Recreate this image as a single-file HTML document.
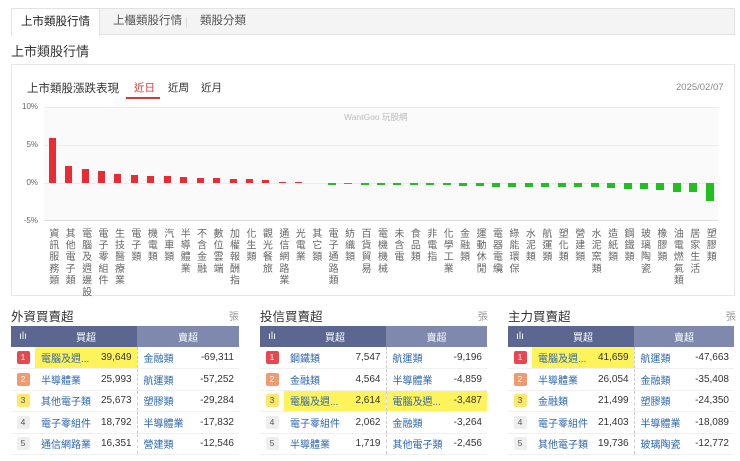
<!DOCTYPE html>
<html><head><meta charset="utf-8"><style>
*{margin:0;padding:0;box-sizing:border-box}
body{width:740px;height:461px;overflow:hidden;background:#fff;font-family:"Liberation Sans","Noto Sans CJK TC",sans-serif;color:#333;position:relative}
.abs{position:absolute}
.tabs{left:11px;top:8px;width:724px;height:27px;background:#f4f4f5;border:1px solid #e2e2e2}
.tab{position:absolute;top:0;height:26px;line-height:24px;font-size:11.5px;color:#555}
.tab.act{left:-1px;top:-1px;width:89px;height:28px;background:#fff;border:1px solid #e2e2e2;border-bottom:none;color:#222;text-align:center;line-height:26px}
.panel{left:11px;top:64px;width:724px;height:232px;border:1px solid #e6e6e6}
.plot{left:44px;top:107px;width:674px;height:114px;background:#fafafa}
.grid{position:absolute;left:0;width:674px;height:1px;background:#ececec}
.cols{position:absolute;left:0;top:0;width:674px;height:114px;display:flex}
.c{flex:1;position:relative}
.c i{position:absolute;left:50%;margin-left:-3.5px;width:7px}
.r{background:#ea2b33;bottom:38px}
.g{background:#1fc01f;top:76px;width:8px!important;margin-left:-4px!important}
.labs{left:44px;top:228px;width:674px;display:flex}
.labs div{flex:1;display:flex;justify-content:center}
.labs span{writing-mode:vertical-rl;text-orientation:upright;font-size:10px;line-height:11px;letter-spacing:1.7px;color:#666}
.yl{font-size:8px;color:#666;left:22px;width:16px;text-align:right}
.sec h3{position:absolute;top:306px;font-size:12.5px;font-weight:normal;color:#333}
.unit{position:absolute;top:308px;font-size:10px;color:#999}
table{position:absolute;top:326px;border-collapse:collapse;font-size:10px;table-layout:fixed}
th{height:21px;color:#fff;font-weight:normal;font-size:10px}
th.a{background:#5b6790}
th.b{background:#7f89ad}
td{height:21.5px;border-bottom:1px solid #f0f0f0;white-space:nowrap;overflow:hidden}
td.n{color:#2b66b0;padding-left:6px}
td.v{text-align:right;padding-right:5px;color:#333}
td.d{border-left:1px dashed #ccc}
td.k{text-align:center}
.bd{display:inline-block;width:13px;height:13px;line-height:13px;font-size:8.5px;text-align:center;border-radius:2px;color:#fff}
.b1{background:#e9474f}.b2{background:#f29a6f}.b3{background:#fbe86c;color:#555}.b4{background:#eee;color:#555}
.hl{background:#fff35c}
</style></head><body>
<div class="abs tabs">
<div class="tab act">上市類股行情</div>
<div class="tab" style="left:101px">上櫃類股行情</div>
<div class="abs" style="left:174px;top:8px;width:1px;height:11px;background:#ddd"></div>
<div class="tab" style="left:188px">類股分類</div>
</div>
<div class="abs" style="left:11px;top:41px;font-size:13px;color:#333">上市類股行情</div>
<div class="abs panel"></div>
<div class="abs" style="left:27px;top:80px;font-size:11.5px;color:#333">上市類股漲跌表現</div>
<div class="abs" style="left:134px;top:80px;font-size:10.5px;color:#e8323a">近日</div>
<div class="abs" style="left:126px;top:97px;width:34px;height:2px;background:#e8323a"></div>
<div class="abs" style="left:168px;top:80px;font-size:10.5px;color:#333">近周</div>
<div class="abs" style="left:201px;top:80px;font-size:10.5px;color:#333">近月</div>
<div class="abs" style="left:676px;top:82px;font-size:9.5px;color:#888">2025/02/07</div>
<div class="abs yl" style="top:102px">10%</div>
<div class="abs yl" style="top:140px">5%</div>
<div class="abs yl" style="top:178px">0%</div>
<div class="abs yl" style="top:216px">-5%</div>
<div class="abs plot">
<div class="grid" style="top:0"></div><div class="grid" style="top:38px"></div><div class="grid" style="top:76px"></div><div class="grid" style="top:113px;background:#ddd"></div>
<div class="abs" style="left:300px;top:4px;font-size:8.5px;color:#bbb">WantGoo 玩股網</div>
<div class="cols">
<div class="c"><i class="r" style="height:45px"></i></div>
<div class="c"><i class="r" style="height:17px"></i></div>
<div class="c"><i class="r" style="height:14px"></i></div>
<div class="c"><i class="r" style="height:12px"></i></div>
<div class="c"><i class="r" style="height:9px"></i></div>
<div class="c"><i class="r" style="height:8px"></i></div>
<div class="c"><i class="r" style="height:7px"></i></div>
<div class="c"><i class="r" style="height:7px"></i></div>
<div class="c"><i class="r" style="height:6px"></i></div>
<div class="c"><i class="r" style="height:5px"></i></div>
<div class="c"><i class="r" style="height:5px"></i></div>
<div class="c"><i class="r" style="height:4.5px"></i></div>
<div class="c"><i class="r" style="height:4px"></i></div>
<div class="c"><i class="r" style="height:3px"></i></div>
<div class="c"><i class="r" style="height:1.5px"></i></div>
<div class="c"><i class="r" style="height:1.5px"></i></div>
<div class="c"></div>
<div class="c"><i class="g" style="height:1.5px"></i></div>
<div class="c"><i class="g" style="height:1px"></i></div>
<div class="c"><i class="g" style="height:1.5px"></i></div>
<div class="c"><i class="g" style="height:1.5px"></i></div>
<div class="c"><i class="g" style="height:2px"></i></div>
<div class="c"><i class="g" style="height:2px"></i></div>
<div class="c"><i class="g" style="height:2px"></i></div>
<div class="c"><i class="g" style="height:2px"></i></div>
<div class="c"><i class="g" style="height:3px"></i></div>
<div class="c"><i class="g" style="height:3px"></i></div>
<div class="c"><i class="g" style="height:3.5px"></i></div>
<div class="c"><i class="g" style="height:3.5px"></i></div>
<div class="c"><i class="g" style="height:3.5px"></i></div>
<div class="c"><i class="g" style="height:3.5px"></i></div>
<div class="c"><i class="g" style="height:3.5px"></i></div>
<div class="c"><i class="g" style="height:3.5px"></i></div>
<div class="c"><i class="g" style="height:3.5px"></i></div>
<div class="c"><i class="g" style="height:5px"></i></div>
<div class="c"><i class="g" style="height:6px"></i></div>
<div class="c"><i class="g" style="height:6px"></i></div>
<div class="c"><i class="g" style="height:7px"></i></div>
<div class="c"><i class="g" style="height:9px"></i></div>
<div class="c"><i class="g" style="height:9px"></i></div>
<div class="c"><i class="g" style="height:18px"></i></div>
</div></div>
<div class="abs labs">
<div><span>資訊服務類</span></div><div><span>其他電子類</span></div><div><span>電腦及週邊設</span></div><div><span>電子零組件</span></div><div><span>生技醫療業</span></div><div><span>電子類</span></div><div><span>機電類</span></div><div><span>汽車類</span></div><div><span>半導體業</span></div><div><span>不含金融</span></div><div><span>數位雲端</span></div><div><span>加權報酬指</span></div><div><span>化生類</span></div><div><span>觀光餐旅</span></div><div><span>通信網路業</span></div><div><span>光電業</span></div><div><span>其它類</span></div><div><span>電子通路類</span></div><div><span>紡織類</span></div><div><span>百貨貿易</span></div><div><span>電機機械</span></div><div><span>未含電</span></div><div><span>食品類</span></div><div><span>非電指</span></div><div><span>化學工業</span></div><div><span>金融類</span></div><div><span>運動休閒</span></div><div><span>電器電纜</span></div><div><span>綠能環保</span></div><div><span>水泥類</span></div><div><span>航運類</span></div><div><span>塑化類</span></div><div><span>營建類</span></div><div><span>水泥窯類</span></div><div><span>造紙類</span></div><div><span>鋼鐵類</span></div><div><span>玻璃陶瓷</span></div><div><span>橡膠類</span></div><div><span>油電燃氣類</span></div><div><span>居家生活</span></div><div><span>塑膠類</span></div>
</div>

<div class="sec">
<h3 style="left:11px">外資買賣超</h3><div class="unit" style="left:229px">張</div>
<table style="left:11px;width:228px">
<colgroup><col style="width:24px"><col style="width:66px"><col style="width:36px"><col style="width:56px"><col style="width:46px"></colgroup>
<tr><th class="a">ılı</th><th class="a" colspan="2">買超</th><th class="b" colspan="2">賣超</th></tr>
<tr><td class="k"><span class="bd b1">1</span></td><td class="n hl">電腦及週...</td><td class="v hl">39,649</td><td class="n d">金融類</td><td class="v">-69,311</td></tr>
<tr><td class="k"><span class="bd b2">2</span></td><td class="n">半導體業</td><td class="v">25,993</td><td class="n d">航運類</td><td class="v">-57,252</td></tr>
<tr><td class="k"><span class="bd b3">3</span></td><td class="n">其他電子類</td><td class="v">25,673</td><td class="n d">塑膠類</td><td class="v">-29,284</td></tr>
<tr><td class="k"><span class="bd b4">4</span></td><td class="n">電子零組件</td><td class="v">18,792</td><td class="n d">半導體業</td><td class="v">-17,832</td></tr>
<tr><td class="k"><span class="bd b4">5</span></td><td class="n">通信網路業</td><td class="v">16,351</td><td class="n d">營建類</td><td class="v">-12,546</td></tr>
</table>
<h3 style="left:260px">投信買賣超</h3><div class="unit" style="left:478px">張</div>
<table style="left:260px;width:227px">
<colgroup><col style="width:24px"><col style="width:66px"><col style="width:36px"><col style="width:56px"><col style="width:45px"></colgroup>
<tr><th class="a">ılı</th><th class="a" colspan="2">買超</th><th class="b" colspan="2">賣超</th></tr>
<tr><td class="k"><span class="bd b1">1</span></td><td class="n">鋼鐵類</td><td class="v">7,547</td><td class="n d">航運類</td><td class="v">-9,196</td></tr>
<tr><td class="k"><span class="bd b2">2</span></td><td class="n">金融類</td><td class="v">4,564</td><td class="n d">半導體業</td><td class="v">-4,859</td></tr>
<tr><td class="k"><span class="bd b3">3</span></td><td class="n hl">電腦及週...</td><td class="v hl">2,614</td><td class="n d hl">電腦及週...</td><td class="v hl">-3,487</td></tr>
<tr><td class="k"><span class="bd b4">4</span></td><td class="n">電子零組件</td><td class="v">2,062</td><td class="n d">金融類</td><td class="v">-3,264</td></tr>
<tr><td class="k"><span class="bd b4">5</span></td><td class="n">半導體業</td><td class="v">1,719</td><td class="n d">其他電子類</td><td class="v">-2,456</td></tr>
</table>
<h3 style="left:508px">主力買賣超</h3><div class="unit" style="left:726px">張</div>
<table style="left:508px;width:226px">
<colgroup><col style="width:24px"><col style="width:66px"><col style="width:36px"><col style="width:55px"><col style="width:45px"></colgroup>
<tr><th class="a">ılı</th><th class="a" colspan="2">買超</th><th class="b" colspan="2">賣超</th></tr>
<tr><td class="k"><span class="bd b1">1</span></td><td class="n hl">電腦及週...</td><td class="v hl">41,659</td><td class="n d">航運類</td><td class="v">-47,663</td></tr>
<tr><td class="k"><span class="bd b2">2</span></td><td class="n">半導體業</td><td class="v">26,054</td><td class="n d">金融類</td><td class="v">-35,408</td></tr>
<tr><td class="k"><span class="bd b3">3</span></td><td class="n">金融類</td><td class="v">21,499</td><td class="n d">塑膠類</td><td class="v">-24,350</td></tr>
<tr><td class="k"><span class="bd b4">4</span></td><td class="n">電子零組件</td><td class="v">21,403</td><td class="n d">半導體業</td><td class="v">-18,089</td></tr>
<tr><td class="k"><span class="bd b4">5</span></td><td class="n">其他電子類</td><td class="v">19,736</td><td class="n d">玻璃陶瓷</td><td class="v">-12,772</td></tr>
</table>
</div>
</body></html>
